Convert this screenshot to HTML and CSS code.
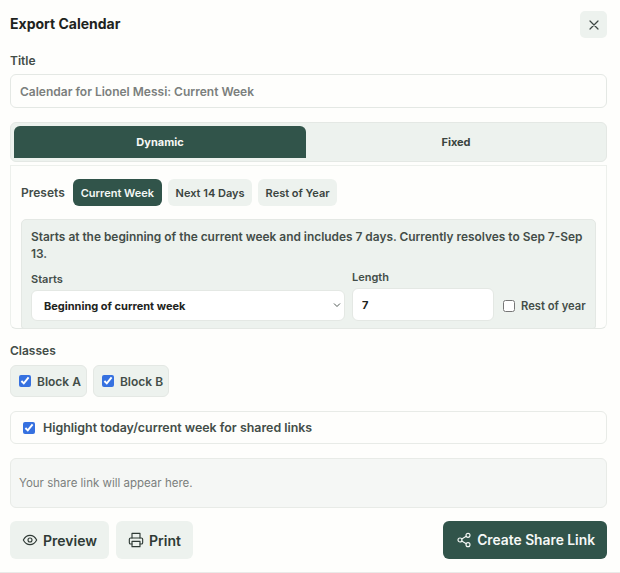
FILE: index.html
```html
<!DOCTYPE html>
<html lang="en">
<head>
<meta charset="utf-8">
<title>Export Calendar</title>
<link rel="stylesheet" href="styles.css">
</head>
<body>
<div class="modal">
  <header class="header">
    <h2 class="heading">Export Calendar</h2>
    <button class="close" aria-label="Close">
      <svg class="close-icon" viewBox="0 0 24 24"><path d="M18 6 6 18M6 6l12 12"/></svg>
    </button>
  </header>
  <label class="label title-label">Title</label>
  <input class="title-input" type="text" placeholder="Calendar for Lionel Messi: Current Week">
  <div class="tabs">
    <div class="tab active">Dynamic</div>
    <div class="tab">Fixed</div>
  </div>
  <section class="panel">
    <div class="presets">
      <span class="presets-label">Presets</span>
      <button class="preset selected">Current Week</button>
      <button class="preset">Next 14 Days</button>
      <button class="preset">Rest of Year</button>
    </div>
    <div class="info">
      <p class="info-text">Starts at the beginning of the current week and includes 7 days. Currently resolves to <span class="nowrap">Sep 7-Sep</span> 13.</p>
      <div class="fields">
        <div class="field starts">
          <label class="field-label">Starts</label>
          <div class="select-wrap">
            <select class="select"><option>Beginning of current week</option></select>
            <svg class="chevron" viewBox="0 0 24 24"><path d="m6 9 6 6 6-6"/></svg>
          </div>
        </div>
        <div class="field length">
          <label class="field-label">Length</label>
          <input class="length-input" type="text" value="7">
        </div>
        <label class="rest"><input class="check-plain" type="checkbox">Rest of year</label>
      </div>
    </div>
  </section>
  <div class="label classes-label">Classes</div>
  <div class="chips">
    <label class="chip"><input class="check" type="checkbox" checked>Block A</label>
    <label class="chip"><input class="check" type="checkbox" checked>Block B</label>
  </div>
  <label class="highlight"><input class="check" type="checkbox" checked>Highlight today/current week for shared links</label>
  <div class="share">Your share link will appear here.</div>
  <footer class="actions">
    <button class="action">
      <svg class="icon" viewBox="0 0 24 24"><path d="M2 12s3.600-7 10-7 10 7 10 7-3.600 7-10 7-10-7-10-7Z"/><circle cx="12" cy="12" r="3"/></svg>Preview
    </button>
    <button class="action">
      <svg class="icon" viewBox="0 0 24 24"><path d="M6 9V2h12v7"/><path d="M6 18H4a2 2 0 0 1-2-2v-5a2 2 0 0 1 2-2h16a2 2 0 0 1 2 2v5a2 2 0 0 1-2 2h-2"/><path d="M6 14h12v8H6z"/></svg>Print
    </button>
    <button class="action primary">
      <svg class="icon" viewBox="0 0 24 24"><circle cx="18" cy="5" r="3"/><circle cx="6" cy="12" r="3"/><circle cx="18" cy="19" r="3"/><path d="m8.590 13.510 6.830 3.980M15.410 6.510l-6.820 3.980"/></svg>Create Share Link
    </button>
  </footer>
</div>
</body>
</html>
```

FILE: styles.css
```css
* { box-sizing: border-box; }
html, body { margin: 0; height: 573px; overflow: hidden; }
body { background: #fefefc; font-family: Inter, "Liberation Sans", sans-serif; color: #2f3a35; }
.modal { height: 573px; padding: 11px 13px 0 10px; display: flex; flex-direction: column; border-bottom: 1px solid #eaeae8; }
button { font-family: inherit; }

.header { display: flex; justify-content: space-between; align-items: center; height: 27px; }
.heading { margin: 0 0 2px; font-size: 14px; font-weight: 700; color: #1d2320; }
.close { width: 27px; height: 27px; padding: 0; border: 0; border-radius: 5px; background: #edf2ee; display: flex; align-items: center; justify-content: center; }
.close-icon { width: 16px; height: 16px; fill: none; stroke: #3c4642; stroke-width: 1.800; stroke-linecap: round; }

.label { font-size: 12px; font-weight: 600; line-height: 16px; color: #434d48; }
.title-label { margin-top: 15px; }
.title-input { margin-top: 5px; height: 34px; width: 100%; padding: 0 9px; border: 1px solid #e4e8e4; border-radius: 6px; background: #fefefc; font: 600 12px Inter, sans-serif; }
.title-input::placeholder { color: #7b7f7d; opacity: 1; }

.tabs { flex: none; margin-top: 14px; height: 40px; padding: 3px 0 3px 3px; display: flex; border: 1px solid #e4e8e4; border-radius: 6px; background: #edf2ee; }
.tab { flex: 1; display: flex; align-items: center; justify-content: center; font-size: 11px; font-weight: 700; color: #3a4440; }
.tab.active { flex: 0 0 292px; background: #31544a; color: #f6f8f6; border-radius: 6px 6px 0 0; }

.panel { flex: none; margin-top: 3px; height: 164px; padding: 13px 10px 0; border: 1px solid #edf0ec; border-bottom-color: #e4e8e4; border-radius: 0 0 6px 6px; }
.presets { display: flex; align-items: center; gap: 6px; height: 27px; }
.presets-label { margin-right: 2px; font-size: 12px; font-weight: 600; color: #434d48; }
.preset { height: 27px; padding: 0 7.500px; border: 0; border-radius: 6px; background: #edf2ee; color: #3a4440; font-size: 11px; font-weight: 600; }
.preset.selected { padding: 0 8px; background: #31544a; color: #f6f8f6; }

.info { margin-top: 13px; height: 110px; padding: 8px 9px 0; border-radius: 5px 5px 3px 3px; border: 1px solid #e4e8e4; background: #edf2ee; }
.info-text { margin: 0; font-size: 11.900px; font-weight: 600; line-height: 17px; color: #434d48; }
.nowrap { white-space: nowrap; }
.fields { margin-top: 8px; display: flex; align-items: flex-end; gap: 7px; }
.field { display: flex; flex-direction: column; }
.starts { width: 314px; }
.length { width: 142px; }
.field-label { font-size: 11px; font-weight: 600; line-height: 14px; color: #434d48; margin-bottom: 4px; }
.select-wrap { position: relative; }
.select { display: block; height: 31px; width: 100%; padding: 0 8px 0 12px; border: 1px solid #e4e8e4; border-radius: 6px; background: #fff; appearance: none; font: 700 11px Inter, sans-serif; color: #1d2320; }
.chevron { position: absolute; right: 2px; top: 9px; width: 12px; height: 12px; fill: none; stroke: #3c4642; stroke-width: 1.800; pointer-events: none; }
.length-input { height: 33px; width: 100%; padding: 0 9px; border: 1px solid #e4e8e4; border-radius: 6px; background: #fff; font: 700 11px Inter, sans-serif; color: #1d2320; }
.rest { display: flex; align-items: center; gap: 6px; height: 31px; margin-left: 2px; font-size: 11.200px; font-weight: 600; color: #434d48; white-space: nowrap; }
.check-plain { margin: 0; width: 12px; height: 12px; }

.classes-label { margin-top: 14px; }
.chips { margin-top: 6px; display: flex; gap: 6px; }
.chip { height: 32px; padding: 0 5px 0 8px; display: flex; align-items: center; gap: 6px; border: 1px solid #e4e8e4; border-radius: 6px; background: #edf2ee; font-size: 12px; font-weight: 600; color: #434d48; }
.check { margin: 0; width: 12px; height: 12px; accent-color: #3671e0; }

.highlight { flex: none; margin-top: 14px; height: 33px; padding-left: 12px; display: flex; align-items: center; gap: 8px; border: 1px solid #e8ebe7; border-radius: 6px; font-size: 12.400px; font-weight: 600; color: #434d48; }
.share { flex: none; margin-top: 14px; height: 50px; padding: 0 8px; display: flex; align-items: center; border: 1px solid #e8ebe7; border-radius: 6px; background: #f5f7f5; font-size: 11.500px; color: #7b7f7d; }

.actions { margin-top: 13px; display: flex; gap: 7px; }
.action { height: 38px; padding: 0 12px; display: flex; align-items: center; gap: 5px; border: 0; border-radius: 6px; background: #edf2ee; color: #2f3a35; font-size: 14px; font-weight: 600; }
.action.primary { margin-left: auto; padding-left: 13px; background: #31544a; color: #f6f8f6; font-size: 13.800px; }
.icon { width: 16px; height: 16px; fill: none; stroke: currentColor; stroke-width: 1.700; stroke-linecap: round; stroke-linejoin: round; }
```
